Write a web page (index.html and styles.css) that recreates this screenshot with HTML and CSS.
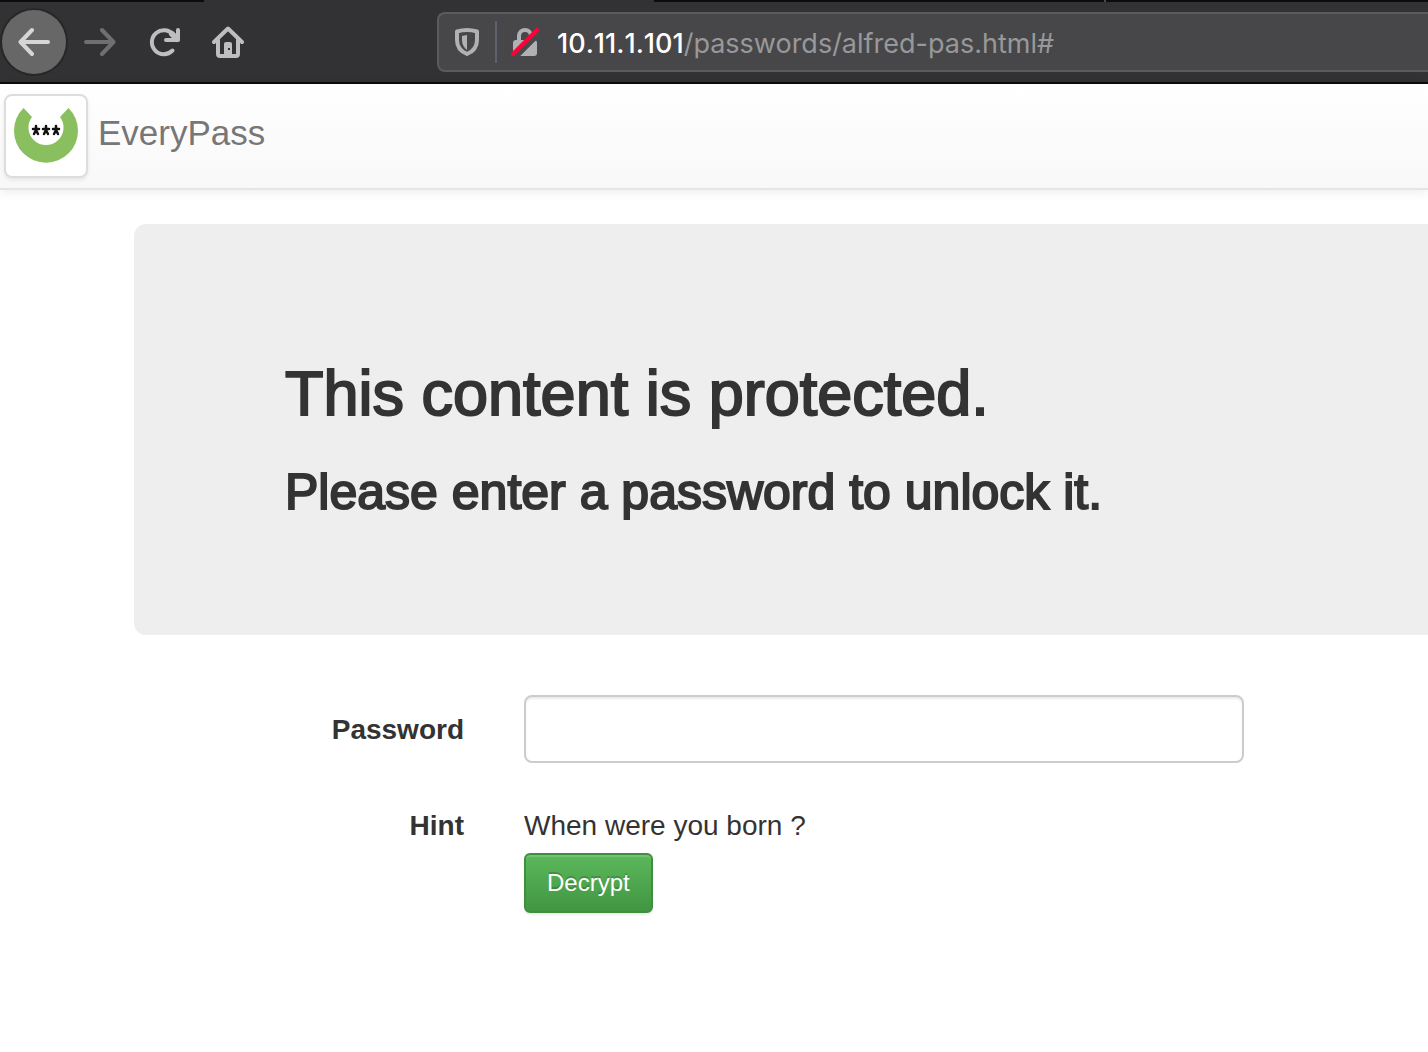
FILE: index.html
```html
<!DOCTYPE html>
<html lang="en">
<head>
<meta charset="utf-8">
<meta name="viewport" content="width=device-width, initial-scale=1">
<title>EveryPass</title>
<link rel="stylesheet" href="styles.css">
</head>
<body>
<div class="browser">
  <div class="tabs"><span class="tab"></span><span class="tab tab-active"></span><span class="tab"></span><span class="tab tab-rest"></span></div>
  <div class="toolbar">
    <button class="nav-button nav-back" type="button" aria-label="Back">
      <svg width="32" height="32" viewBox="0 0 32 32" fill="none" stroke="currentColor" stroke-width="4" stroke-linecap="round" stroke-linejoin="round"><path d="M14 4 2.500 16 14 28M3 16h27"/></svg>
    </button>
    <button class="nav-button nav-forward" type="button" aria-label="Forward">
      <svg width="32" height="32" viewBox="0 0 32 32" fill="none" stroke="currentColor" stroke-width="4" stroke-linecap="round" stroke-linejoin="round"><path d="M18 4 29.500 16 18 28M29 16H2"/></svg>
    </button>
    <button class="nav-button" type="button" aria-label="Reload">
      <svg width="32" height="32" viewBox="0 0 32 32" fill="none" stroke="currentColor" stroke-width="4" stroke-linecap="round" stroke-linejoin="round"><path d="M24.500 24.500A12 12 0 1 1 25.500 9"/><path d="M30 4v10H18"/><path d="M24 8l5 5" stroke-width="6"/></svg>
    </button>
    <button class="nav-button" type="button" aria-label="Home">
      <svg width="32" height="32" viewBox="0 0 32 32" fill="none" stroke="currentColor" stroke-width="4" stroke-linecap="round" stroke-linejoin="round"><path d="M2 16 16 2.500 30 16"/><path d="M6 14v14q0 2 2 2h16q2 0 2-2V14"/><path fill="currentColor" stroke="none" d="M12 30V18q0-2 2-2h4q2 0 2 2v12z"/><path d="M16 22h2v2h-2z" fill="#323234" stroke="none"/></svg>
    </button>
    <div class="address">
      <svg class="shield" width="24" height="28" viewBox="0 0 24 28"><path d="M12 2Q17 2 22 3.500V12Q22 22 12 26Q2 22 2 12V3.500Q7 2 12 2z" fill="none" stroke="currentColor" stroke-width="4" stroke-linejoin="round"/><path d="M12 7v15Q7 18 7 12V8z" fill="currentColor"/></svg>
      <span class="divider"></span>
      <svg class="lock" width="28" height="28" viewBox="0 0 28 28"><path d="M8 13V8a6 6 0 0 1 12 0v5" fill="none" stroke="currentColor" stroke-width="4"/><rect x="2" y="12" width="24" height="16" rx="3" fill="currentColor"/><path d="M4 29 29 4" stroke="#49494b" stroke-width="6"/><path d="M2 26 26 2" stroke="#ff0039" stroke-width="4" stroke-linecap="round"/></svg>
      <span class="url"><span class="host">10.11.1.101</span>/passwords/alfred-pas.html#</span>
    </div>
  </div>
</div>
<header class="navbar">
  <a class="brand" href="#">
    <span class="logo">
      <svg width="64" height="64" viewBox="0 0 64 64"><path d="M9.500 4A32 32 0 1 0 54.500 4L46 13A17.500 17.500 0 1 1 18 13z" fill="#8abf60"/><g stroke="#111" stroke-width="2.500" stroke-linecap="round"><path d="M22 22v4M19 25h6M22 26l-2 4M22 26l2 4M32 22v4M29 25h6M32 26l-2 4M32 26l2 4M42 22v4M39 25h6M42 26l-2 4M42 26l2 4"/></g></svg>
    </span>
    <span class="brand-name">EveryPass</span>
  </a>
</header>
<main class="content">
  <section class="jumbotron">
    <h2>This content is protected.</h2>
    <h3>Please enter a password to unlock it.</h3>
  </section>
  <form class="form">
    <label for="password">Password</label>
    <input class="password" id="password" type="password">
    <span class="hint-label">Hint</span>
    <div class="hint">When were you born ?</div>
    <button class="decrypt" type="button">Decrypt</button>
  </form>
</main>
</body>
</html>
```
FILE: styles.css
```css
* {
  box-sizing: border-box;
}

body {
  margin: 0;
  background: #fff;
  color: #333;
  font: 28px/40px "Liberation Sans", Arial, sans-serif;
  overflow-x: hidden;
}

.browser {
  background: #323234;
  border-bottom: 2px solid #0c0c0d;
}

.tabs {
  display: flex;
  height: 2px;
}

.tab {
  width: 450px;
  background: #0c0c0d;
}

.tab:first-child {
  width: 204px;
}

.tab-active {
  background: #323234;
}

.tab-rest {
  flex: 1;
  border-left: 2px solid #4a4a4c;
}

.toolbar {
  display: flex;
  align-items: center;
  height: 80px;
}

.nav-button {
  display: flex;
  flex: none;
  align-items: center;
  justify-content: center;
  width: 64px;
  height: 64px;
  padding: 0;
  border: 0;
  background: none;
  color: #bebebf;
}

.nav-back {
  margin: 0 2px;
  border-radius: 50%;
  background: #676767;
  box-shadow: 0 0 0 2px #272728;
  color: #d6d6d6;
}

.nav-forward {
  color: #6f6f70;
}

.address {
  display: flex;
  flex: 1;
  align-items: center;
  height: 60px;
  margin-left: 177px;
  padding-left: 16px;
  border: 2px solid #5b5b5d;
  border-right: 0;
  border-radius: 8px 0 0 8px;
  background: #474749;
  color: #b1b1b3;
}

.divider {
  width: 2px;
  height: 42px;
  margin: 0 14px 0 16px;
  background: #5c616b;
}

.url {
  margin-left: 18px;
  padding-top: 4px;
  color: #98989a;
  font: 27px/40px Inter, sans-serif;
  white-space: nowrap;
}

.host {
  color: #fff;
  font-weight: 500;
  font-kerning: none;
}

.navbar {
  padding: 10px 4px;
  border-bottom: 2px solid #e5e5e5;
  background: linear-gradient(#fff, #f8f8f8);
  box-shadow: 0 2px 10px rgba(0, 0, 0, .08);
}

.brand {
  display: inline-flex;
  align-items: flex-start;
  gap: 10px;
  color: #777;
  text-decoration: none;
  vertical-align: top;
}

.logo {
  display: flex;
  padding: 8px;
  border: 2px solid #ddd;
  border-radius: 8px;
  background: #fff;
  box-shadow: 0 2px 4px rgba(0, 0, 0, .08);
}

.brand-name {
  padding-top: 19px;
  font-size: 35px;
}

.content {
  padding: 34px 0 100px 134px;
}

.jumbotron {
  padding: 96px 151px;
  border-radius: 12px 0 0 12px;
  background: #eee;
}

.jumbotron h2,
.jumbotron h3 {
  margin: 40px 0 20px;
  font-weight: 400;
  -webkit-text-stroke: 2px #333;
}

.jumbotron h2 {
  font-size: 63px;
  line-height: 66px;
}

.jumbotron h3 {
  font-size: 50px;
  line-height: 53px;
}

.form {
  display: grid;
  grid-template-columns: 330px minmax(0, 720px);
  column-gap: 60px;
  align-items: center;
  margin-top: 60px;
}

.form label,
.hint-label {
  font-weight: 700;
  text-align: right;
}

.form label {
  padding-top: 2px;
}

.password {
  width: 100%;
  height: 68px;
  padding: 12px 24px;
  border: 2px solid #ccc;
  border-radius: 8px;
  background: #fff;
  box-shadow: inset 0 2px 2px rgba(0, 0, 0, .08);
  font: inherit;
}

.hint-label,
.hint {
  margin: 43px 0 7px;
}

.decrypt {
  grid-column: 2;
  justify-self: start;
  height: 60px;
  padding: 0 21px;
  border: 2px solid #3e8f3e;
  border-radius: 6px;
  background: linear-gradient(#5cb85c, #419641);
  box-shadow: inset 0 2px 0 rgba(255, 255, 255, .15), 0 2px 2px rgba(0, 0, 0, .08);
  color: #fff;
  font: 24px/36px "Liberation Sans", Arial, sans-serif;
  text-shadow: 0 -2px 0 rgba(0, 0, 0, .2);
}
```
